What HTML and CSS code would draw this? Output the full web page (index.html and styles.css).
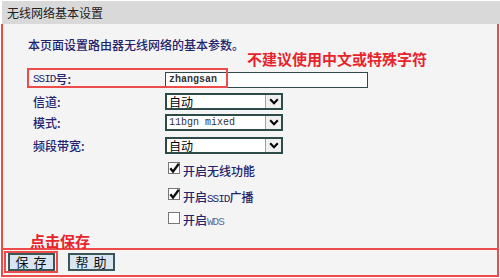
FILE: index.html
```html
<!DOCTYPE html>
<html lang="zh-CN">
<head>
<meta charset="utf-8">
<title>无线网络基本设置</title>
<link rel="stylesheet" href="styles.css">
</head>
<body>
<div class="page">
  <div class="header">无线网络基本设置</div>
  <div class="panel">
    <div class="content">
      <p class="intro">本页面设置路由器无线网络的基本参数。</p>
      <div class="note">不建议使用中文或特殊字符</div>
      <div class="ssid-mark"></div>
      <div class="form">
        <div class="label"><span class="latin">SSID</span>号:</div>
        <div class="ctrl"><div class="textbox">zhangsan</div></div>

        <div class="label">信道:</div>
        <div class="ctrl">
          <div class="select"><span class="val">自动</span><span class="arrow"><svg width="10" height="7" viewBox="0 0 10 7"><path d="M1.2 1.2 L5 5.2 L8.8 1.2" fill="none" stroke="#000" stroke-width="2"/></svg></span></div>
        </div>

        <div class="label">模式:</div>
        <div class="ctrl">
          <div class="select"><span class="val mono">11bgn mixed</span><span class="arrow"><svg width="10" height="7" viewBox="0 0 10 7"><path d="M1.2 1.2 L5 5.2 L8.8 1.2" fill="none" stroke="#000" stroke-width="2"/></svg></span></div>
        </div>

        <div class="label">频段带宽:</div>
        <div class="ctrl">
          <div class="select"><span class="val">自动</span><span class="arrow"><svg width="10" height="7" viewBox="0 0 10 7"><path d="M1.2 1.2 L5 5.2 L8.8 1.2" fill="none" stroke="#000" stroke-width="2"/></svg></span></div>
        </div>

        <div class="ctrl check-row">
          <span class="cb"><svg width="13" height="13" viewBox="0 0 13 13"><path d="M2.3 6.3 L5 9.6 L10.8 1.8" fill="none" stroke="#111" stroke-width="2.4"/></svg></span>
          <span>开启无线功能</span>
        </div>
        <div class="ctrl check-row">
          <span class="cb"><svg width="13" height="13" viewBox="0 0 13 13"><path d="M2.3 6.3 L5 9.6 L10.8 1.8" fill="none" stroke="#111" stroke-width="2.4"/></svg></span>
          <span>开启<span class="latin">SSID</span>广播</span>
        </div>
        <div class="ctrl check-row">
          <span class="cb"></span>
          <span>开启<span class="latin wds">WDS</span></span>
        </div>
      </div>
      <div class="hint">点击保存</div>
    </div>
    <div class="footer">
      <span class="save-mark"><button class="btn">保 存</button></span>
      <button class="btn">帮 助</button>
    </div>
  </div>
</div>
</body>
</html>
```

FILE: styles.css
```css
* { box-sizing: border-box; }
html, body { margin: 0; padding: 0; background: #fff; }
body {
  width: 500px;
  height: 278px;
  overflow: hidden;
  font-family: "Noto Sans CJK SC", "Noto Sans", sans-serif;
  font-size: 12px;
  font-weight: 500;
  color: #23236e;
}
.page { padding-top: 1px; }

.header {
  margin-left: 2px;
  height: 23px;
  line-height: 23px;
  padding-left: 5px;
  background: #d9d9d9;
  color: #222;
  font-size: 12px;
  font-weight: 400;
}

.panel {
  margin-left: 1px;
  width: 498px;
  border: 2px solid #ee4b4b;
  border-top: none;
  background: #f4f4f4;
}

.content {
  position: relative;
  height: 226px;
  padding-top: 13px;
  border-bottom: 2px solid #ee4b4b;
}

.intro {
  margin: 0 0 0 25px;
  line-height: 16px;
  color: #23236e;
}

.note {
  position: absolute;
  left: 244px;
  top: 27px;
  font-size: 15px;
  line-height: 15px;
  font-weight: bold;
  color: #e8232b;
  white-space: nowrap;
}

.ssid-mark {
  position: absolute;
  left: 24px;
  top: 44px;
  width: 201px;
  height: 20px;
  border: 2px solid #ee4b4b;
  pointer-events: none;
}

.form {
  margin: 14px 0 0 29px;
  display: grid;
  grid-template-columns: 133px 1fr;
  grid-template-rows: 23px 23px 19px 27px 22px 30px 17px;
}

.label {
  display: flex;
  align-items: center;
  padding-left: 1px;
  white-space: nowrap;
}

.latin {
  font-family: "Liberation Mono", monospace;
  font-size: 11px;
  font-weight: 400;
  letter-spacing: -1px;
}
.wds { color: #5d6c9c; }

.ctrl {
  grid-column: 2;
  display: flex;
  align-items: center;
}

.textbox {
  width: 203px;
  height: 16px;
  margin-top: 2px;
  border: 1px solid #2e4b4b;
  background: #fff;
  padding-left: 3px;
  font-family: "Liberation Mono", monospace;
  font-size: 10px;
  font-weight: bold;
  line-height: 14px;
  color: #333;
}

.select {
  width: 118px;
  height: 17px;
  border: 2px solid #2e4b4b;
  background: #fff;
  display: flex;
  align-items: stretch;
  color: #000;
}
.select .val {
  flex: 1;
  padding-left: 2px;
  line-height: 13px;
  font-size: 12px;
  font-weight: 400;
}
.select .val.mono {
  font-family: "Liberation Mono", monospace;
  font-size: 10px;
  color: #333;
}
.arrow {
  width: 16px;
  border-left: 1px solid #9aa6a6;
  background: #f0f0f0;
  display: flex;
  align-items: center;
  justify-content: center;
}
.arrow svg { display: block; }

.check-row {
  gap: 3px;
  padding-left: 3px;
  white-space: nowrap;
  color: #23236e;
}
.cb {
  width: 12px;
  height: 12px;
  margin-bottom: 4px;
  border: 1px solid #777;
  background: #fff;
  display: flex;
  align-items: center;
  justify-content: center;
  overflow: visible;
}
.cb svg { display: block; flex: none; }

.hint {
  margin-left: 27px;
  padding-top: 5px;
  font-size: 15px;
  line-height: 15px;
  font-weight: bold;
  color: #e8232b;
}

.footer {
  height: 25px;
  padding: 1px 0 0 1px;
  display: flex;
  align-items: flex-start;
  gap: 10px;
}

.save-mark {
  display: flex;
  border: 2px solid #ee4b4b;
  padding: 0 1px 0 2px;
}

.btn {
  width: 47px;
  height: 18px;
  margin: 0;
  padding: 0;
  border: 2px solid #3a5656;
  background: #d9e5f1;
  font-family: "Noto Sans CJK SC", sans-serif;
  font-size: 13px;
  font-weight: 400;
  line-height: 14px;
  letter-spacing: 1px;
  color: #111;
}
.footer > .btn { margin-top: 2px; }
```
